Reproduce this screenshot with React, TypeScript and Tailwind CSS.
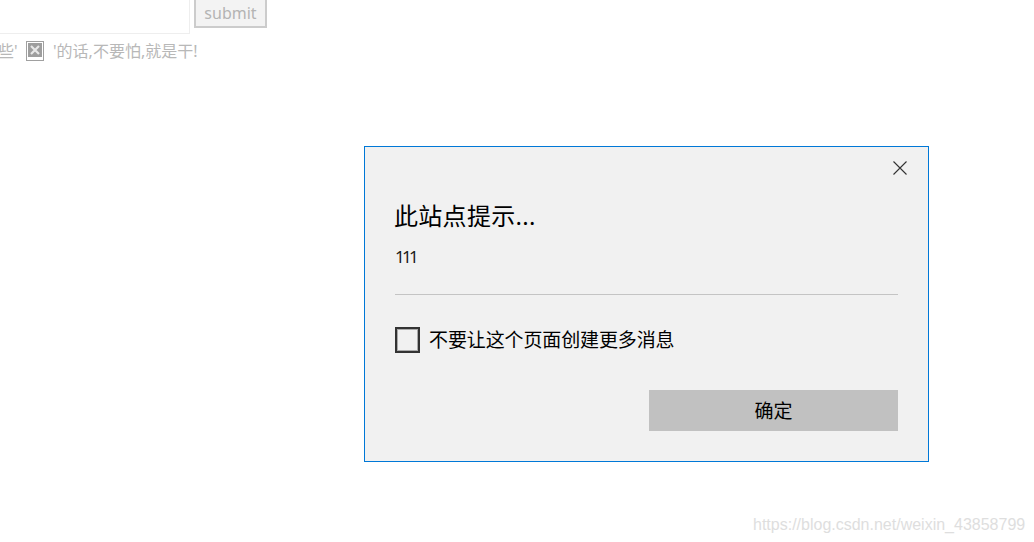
const sans = "font-['Noto_Sans','Noto_Sans_CJK_SC',sans-serif]";

export default function App() {
  return (
    <div className={`relative h-[542px] w-[1034px] overflow-hidden bg-white ${sans}`}>
      <div className="flex items-start">
        <div className="h-[34px] w-[190px] border-r border-b border-[#eeeeee]" />
        <button className="ml-1 flex h-[28px] w-[73px] items-end justify-center border-2 border-t-0 border-[#cccccc] bg-[#f3f3f3] pb-[2px] text-[16px] leading-[22px] text-[#b4b4b4]">
          submit
        </button>
      </div>
      <div className="-ml-[2px] mt-[3px] flex h-[28px] items-center text-[16px] text-[#b8b8b8]">
        <span className="w-[28px] whitespace-nowrap">些'</span>
        <svg className="h-[20px] w-[18px]" viewBox="0 0 18 20">
          <rect x="0.5" y="0.5" width="17" height="19" fill="#ffffff" stroke="#a0a0a0" />
          <rect x="2" y="2" width="14" height="14" fill="#9e9e9e" />
          <path d="M5 5l8 8M13 5l-8 8" stroke="#e8e8e8" strokeWidth="2.2" />
        </svg>
        <span className="ml-[9px] whitespace-nowrap">'的话,不要怕,就是干!</span>
      </div>

      <div className="absolute left-[364px] top-[146px] flex h-[316px] w-[565px] flex-col border border-[#0078d7] bg-[#f1f1f1] pl-[30px] pr-[30px]">
        <svg className="absolute right-[21px] top-[14px] h-[14px] w-[14px]" viewBox="0 0 14 14">
          <path d="M0.5 0.5l13 13M13.5 0.5l-13 13" stroke="#333333" strokeWidth="1.1" fill="none" />
        </svg>
        <h1 className="mt-[53px] -ml-px text-[24px] font-normal leading-[32px] tracking-[0.3px] text-black">此站点提示...</h1>
        <p className="mt-[14px] text-[17px] leading-[22px] tracking-[-2.7px] text-[#1a1a1a]">111</p>
        <div className="mt-[26px] h-px w-full bg-[#c4c4c4]" />
        <div className="mt-[32px] flex items-center">
          <span className="h-[26px] w-[25px] border-2 border-[#333333] shadow-[inset_0_0_0_1px_#aaaaaa]" />
          <span className="ml-[9px] text-[19px] leading-[26px] tracking-[-0.12px] text-black">不要让这个页面创建更多消息</span>
        </div>
        <div className="mt-[37px] flex justify-end">
          <button className="flex h-[41px] w-[249px] items-center justify-center bg-[#c1c1c1] text-[19px] leading-[26px] text-black">确定</button>
        </div>
      </div>

      <div className="absolute left-[753px] top-[514px] whitespace-nowrap font-['Liberation_Sans',sans-serif] text-[16px] leading-[22px] text-[#dedede]">
        https://blog.csdn.net/weixin_43858799
      </div>
    </div>
  );
}
